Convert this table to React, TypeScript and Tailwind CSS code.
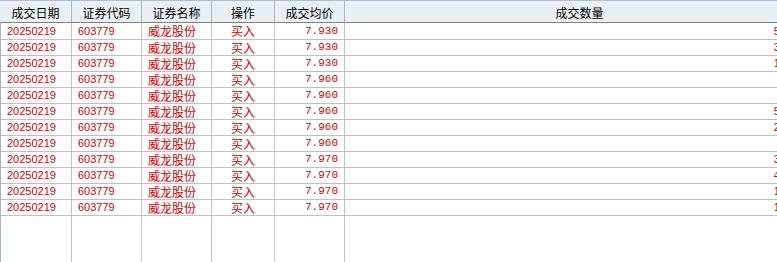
import React from "react";

const cols = [
  { w: "w-[72px]", align: "left" },
  { w: "w-[70px]", align: "left" },
  { w: "w-[70px]", align: "left" },
  { w: "w-[63px]", align: "center" },
  { w: "w-[70px]", align: "right" },
  { w: "w-[470px]", align: "right" },
];

const headers = ["成交日期", "证券代码", "证券名称", "操作", "成交均价", "成交数量"];

const prices = ["7.930", "7.930", "7.930", "7.960", "7.960", "7.960", "7.960", "7.960", "7.970", "7.970", "7.970", "7.970"];
const qty = ["500", "300", "100", "", "", "500", "200", "", "300", "400", "100", "100"];

const num = { fontFamily: '"Liberation Sans", Arial, sans-serif' };
const mono = { fontFamily: '"Liberation Mono", "Courier New", monospace' };
const cjk = { fontFamily: '"Noto Sans CJK SC", "Noto Sans", sans-serif' };

export default function App() {
  return (
    <div className="w-[777px] h-[262px] overflow-hidden bg-white flex flex-col">
      <div className="flex h-[23px] shrink-0 bg-[#e9f0f5] border-t border-[#aabdd2] border-b border-b-[#808080]">
        {headers.map((h, i) => (
          <div
            key={i}
            className={`${cols[i].w} shrink-0 border-r border-[#b4b4b4] flex items-center justify-center pt-[2px] text-[12px] text-black leading-none`}
            style={cjk}
          >
            {h}
          </div>
        ))}
      </div>
      <div className="flex flex-col flex-1 border-l border-[#a3b8d6] w-[815px]">
        {prices.map((p, r) => (
          <div key={r} className={`flex shrink-0 border-b border-[#c0c0c0] ${r === 0 ? "h-[17px]" : "h-[16px]"}`}>
            <div className="w-[71px] shrink-0 border-r border-[#c0c0c0] flex items-center pl-[6px] text-[11px] text-[#cc0000] leading-none" style={num}>20250219</div>
            <div className="w-[70px] shrink-0 border-r border-[#c0c0c0] flex items-center pl-[6px] text-[11px] text-[#cc0000] leading-none" style={num}>603779</div>
            <div className="w-[70px] shrink-0 border-r border-[#c0c0c0] flex items-center pl-[6px] text-[12px] text-[#cc0000] leading-none" style={cjk}>威龙股份</div>
            <div className="w-[63px] shrink-0 border-r border-[#c0c0c0] flex items-center justify-center text-[12px] text-[#cc0000] leading-none" style={cjk}>买入</div>
            <div className="w-[70px] shrink-0 border-r border-[#c0c0c0] flex items-center justify-end pr-[6px] text-[11px] text-[#cc0000] leading-none" style={mono}>{p}</div>
            <div className="w-[470px] shrink-0 flex items-center justify-end pr-[23px] text-[11px] text-[#cc0000] leading-none" style={num}>{qty[r]}</div>
          </div>
        ))}
        <div className="flex flex-1">
          <div className="w-[71px] shrink-0 border-r border-[#c0c0c0]" />
          <div className="w-[70px] shrink-0 border-r border-[#c0c0c0]" />
          <div className="w-[70px] shrink-0 border-r border-[#c0c0c0]" />
          <div className="w-[63px] shrink-0 border-r border-[#c0c0c0]" />
          <div className="w-[70px] shrink-0 border-r border-[#c0c0c0]" />
          <div className="w-[470px] shrink-0" />
        </div>
      </div>
    </div>
  );
}
